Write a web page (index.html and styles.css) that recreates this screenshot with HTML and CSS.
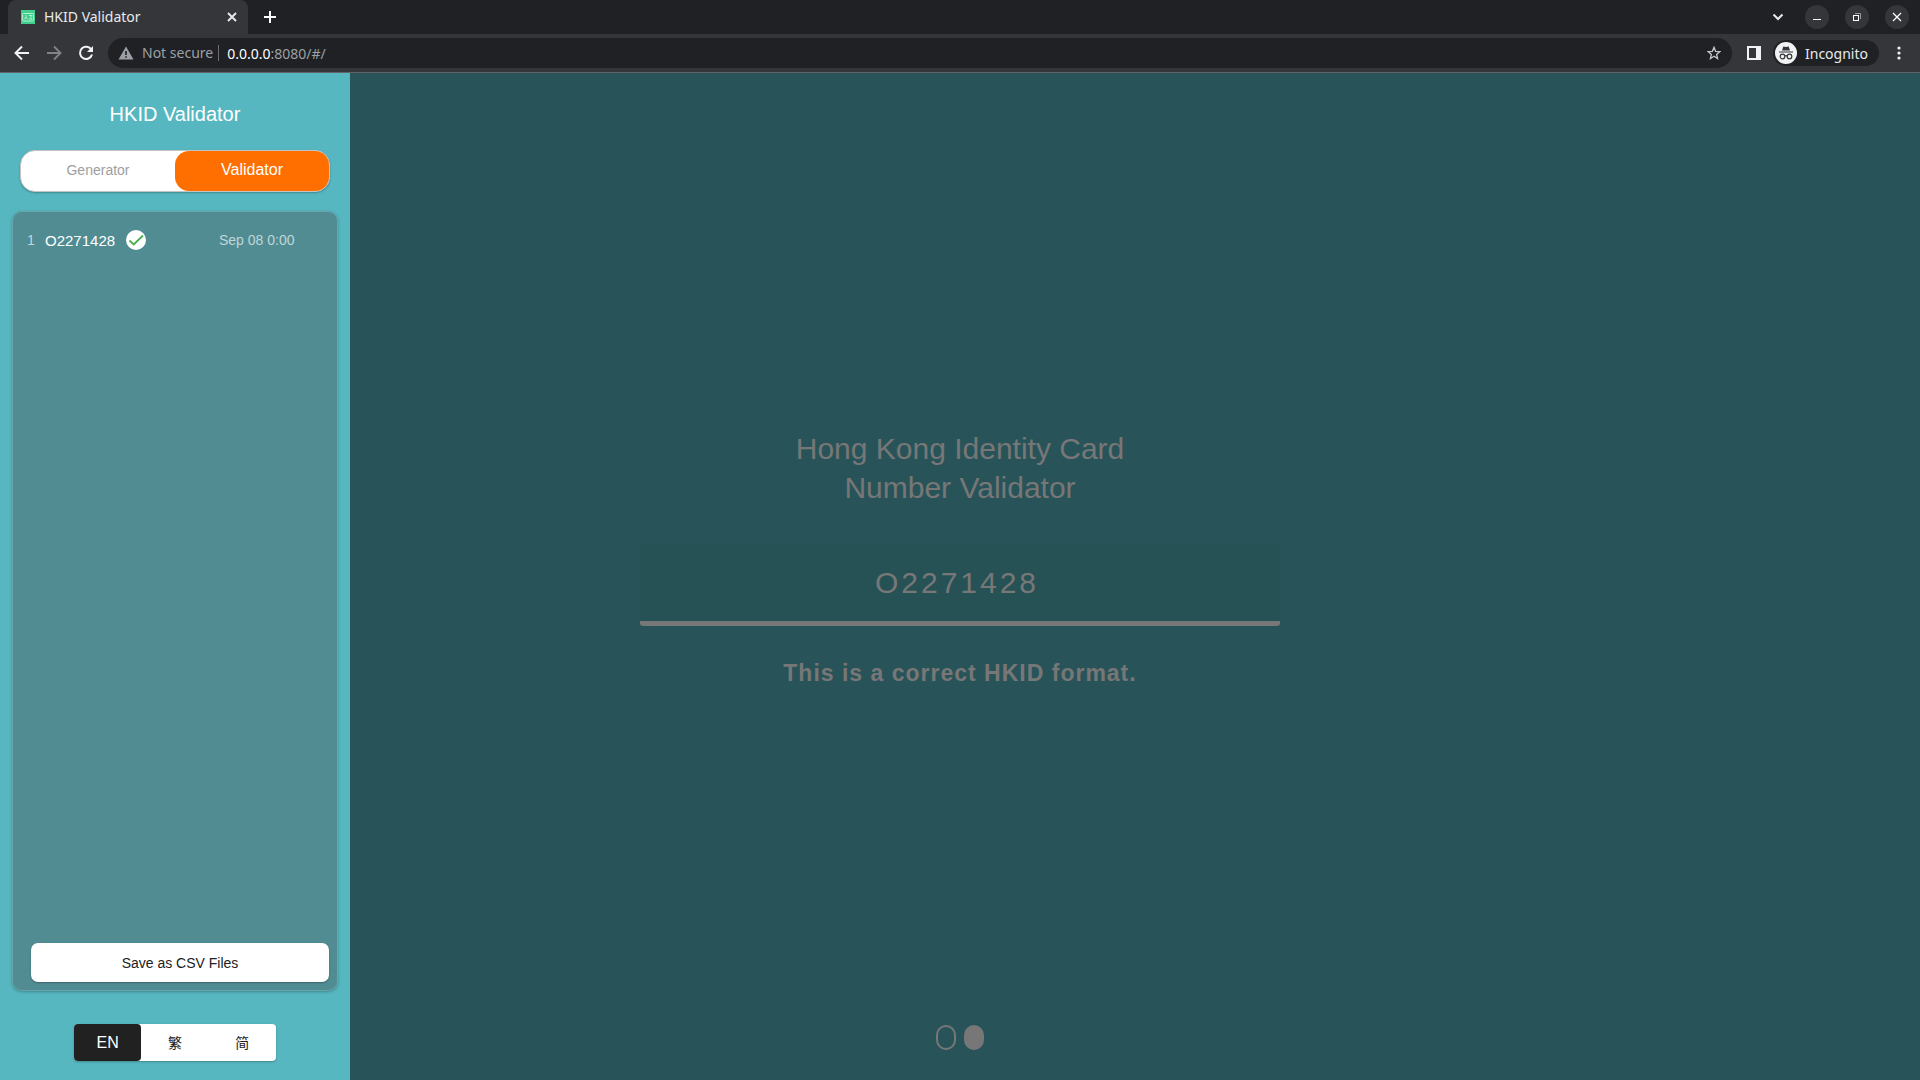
FILE: index.html
```
<!DOCTYPE html>
<html lang="en">
<head>
<meta charset="utf-8">
<title>HKID Validator</title>
<link rel="stylesheet" href="styles.css">
</head>
<body>
<div class="browser">
  <header class="chrome">
    <div class="tabstrip">
      <div class="tab">
        <svg class="favicon" width="14" height="14" viewBox="0 0 14 14" fill="none"><path fill="#41cf8e" d="M0 0h14v14H0z"/><rect x="1.5" y="3.5" width="11" height="7.5" rx=".8" stroke="#b5efd2"/><path d="M3.300 9.300l1.700-2.300 1.500 2.300M5 5v1.600M8 5.500h3L9.500 7.200 11 9H8" stroke="#b5efd2"/></svg>
        <span class="tab-title">HKID Validator</span>
        <button class="icon-btn tab-close" aria-label="Close tab"><svg width="10" height="10" viewBox="0 0 10 10" stroke="#e8eaed" stroke-width="1.900"><path d="M1 1l8 8M9 1L1 9"/></svg></button>
      </div>
      <button class="icon-btn new-tab" aria-label="New tab"><svg width="12" height="12" viewBox="0 0 12 12" stroke="#fff" stroke-width="2"><path d="M6 0v12M0 6h12"/></svg></button>
      <div class="window-controls">
        <button class="icon-btn" aria-label="Search tabs"><svg width="12" height="8" viewBox="0 0 12 8" fill="none" stroke="#e8eaed" stroke-width="2"><path d="M1.500 1.500L6 6l4.500-4.500"/></svg></button>
        <button class="icon-btn round" aria-label="Minimize"><svg width="10" height="10" viewBox="0 0 10 10" stroke="#fff"><path d="M1 7.500h8"/></svg></button>
        <button class="icon-btn round" aria-label="Restore"><svg width="10" height="10" viewBox="0 0 10 10" fill="none"><path d="M3 1.500h5.500V7" stroke="#999"/><rect x="1.500" y="3.500" width="5" height="5" stroke="#fff"/></svg></button>
        <button class="icon-btn round" aria-label="Close"><svg width="10" height="10" viewBox="0 0 10 10" stroke="#fff" stroke-width="1.300"><path d="M1 1l8 8M9 1L1 9"/></svg></button>
      </div>
    </div>
    <div class="toolbar">
      <div class="nav">
        <button class="icon-btn" aria-label="Back"><svg width="16" height="16" viewBox="0 0 16 16" fill="none" stroke="#f1f3f4" stroke-width="1.900"><path d="M15 8H2M8 1.500L1.500 8 8 14.500"/></svg></button>
        <button class="icon-btn" aria-label="Forward"><svg width="16" height="16" viewBox="0 0 16 16" fill="none" stroke="#808285" stroke-width="1.900"><path d="M1 8h13M8 1.500L14.500 8 8 14.500"/></svg></button>
        <button class="icon-btn" aria-label="Reload"><svg width="16" height="16" viewBox="0 0 16 16" fill="none" stroke="#f1f3f4" stroke-width="2"><path d="M13.400 4.800A6.100 6.100 0 1 0 14 9.400"/><path d="M15 1v6H9z" fill="#f1f3f4" stroke="none"/></svg></button>
      </div>
      <div class="omnibox">
        <svg width="16" height="14" viewBox="0 0 16 14"><path d="M8 .5L15.500 13.500H.5z" fill="#9aa0a6"/><path d="M7.200 5h1.600v4H7.200zM7.200 10.200h1.600v1.600H7.200z" fill="#202124"/></svg>
        <span class="security">Not secure</span>
        <div class="url" role="textbox" aria-label="Address"><span class="host">0.0.0.0</span>:8080/#/</div>
        <button class="icon-btn" aria-label="Bookmark"><svg width="14" height="14" viewBox="0 0 14 14" fill="none" stroke="#c4c7c5" stroke-width="1.300"><path d="M7 1.300l1.600 4 4.200.3-3.200 2.800 1 4.200L7 10.300l-3.600 2.300 1-4.200L1.200 5.600l4.200-.3z"/></svg></button>
      </div>
      <div class="tools">
        <button class="icon-btn" aria-label="Side panel"><svg width="14" height="14" viewBox="0 0 14 14"><path fill="#f1f3f4" fill-rule="evenodd" d="M0 0h14v14H0zM2 2v10h7V2z"/></svg></button>
        <button class="incognito"><svg width="22" height="22" viewBox="0 0 22 22" fill="none"><circle cx="11" cy="11" r="11" fill="#f1f3f4"/><path fill="#35363a" d="M7 8.500l1.300-4L11 5l2.700-.5 1.300 4zM4 9.500h14v1H4z"/><g stroke="#35363a" stroke-width="1.200"><circle cx="7.500" cy="14.500" r="2.300"/><circle cx="14.500" cy="14.500" r="2.300"/><path d="M9.800 14q1.200-.8 2.400 0"/></g></svg>Incognito</button>
        <button class="icon-btn" aria-label="Menu"><svg width="4" height="14" viewBox="0 0 4 14" fill="#f1f3f4"><circle cx="2" cy="2" r="1.600"/><circle cx="2" cy="7" r="1.600"/><circle cx="2" cy="12" r="1.600"/></svg></button>
      </div>
    </div>
  </header>

  <div class="page">
    <main class="stage">
      <form class="validator">
        <h1 class="heading"><label for="hkid">Hong Kong Identity Card<br>Number Validator</label></h1>
        <input class="hkid" id="hkid" type="text" value="O2271428">
        <p class="message">This is a correct HKID format.</p>
      </form>
      <nav class="dots">
        <button class="dot" aria-label="Generator"></button>
        <button class="dot active" aria-label="Validator"></button>
      </nav>
    </main>

    <aside class="drawer">
      <h2 class="drawer-title">HKID Validator</h2>
      <div class="switch">
        <button class="switch-item">Generator</button>
        <button class="switch-item active">Validator</button>
      </div>
      <section class="history">
        <ol class="records">
          <li class="record">
            <span class="index">1</span>
            <span class="number">O2271428</span>
            <svg width="20" height="20" viewBox="0 0 20 20" fill="none"><circle cx="10" cy="10" r="10" fill="#fff"/><path d="M3.500 10.500l4.200 4L17 5.500" stroke="#4caf50" stroke-width="1.800"/></svg>
            <time class="date">Sep 08 0:00</time>
          </li>
        </ol>
        <button class="save">Save as CSV Files</button>
      </section>
      <div class="languages">
        <button class="lang active">EN</button>
        <button class="lang" lang="zh-Hant">繁</button>
        <button class="lang" lang="zh-Hans">简</button>
      </div>
    </aside>
  </div>
</div>
</body>
</html>
```
FILE: styles.css
```
* { box-sizing: border-box; }

body {
  margin: 0;
  font-family: "Liberation Sans", "Noto Sans CJK SC", Arial, sans-serif;
}

button {
  margin: 0;
  padding: 0;
  border: 0;
  background: none;
  font: inherit;
  color: inherit;
}

h1, h2, p, ol { margin: 0; padding: 0; font-weight: 400; }

.browser {
  display: flex;
  flex-direction: column;
  min-height: 100vh;
}

/* Browser chrome */
.chrome {
  font-family: "Noto Sans", "Open Sans", sans-serif;
  font-size: 14px;
  color: #e8eaed;
  background: #35363a;
  border-bottom: 1px solid #626366;
}

.icon-btn {
  display: flex;
  align-items: center;
  justify-content: center;
}

.tabstrip {
  display: flex;
  align-items: center;
  height: 34px;
  padding: 0 11px 0 8px;
  background: #202124;
}

.tab {
  display: flex;
  align-items: center;
  width: 240px;
  height: 34px;
  padding: 0 11px 0 13px;
  gap: 9px;
  background: #35363a;
  border-radius: 8px 8px 0 0;
}

.tab-title {
  flex: 1;
  padding-bottom: 2px;
}

.new-tab { margin-left: 16px; }

.window-controls {
  display: flex;
  align-items: center;
  gap: 16px;
  margin-left: auto;
}

.window-controls .icon-btn:first-child { margin-right: 5px; }

.round {
  width: 24px;
  height: 24px;
  border-radius: 50%;
  background: #35363a;
}

.toolbar {
  display: flex;
  align-items: center;
  height: 38px;
  padding: 0 19px 0 14px;
}

.nav { display: flex; gap: 16px; }

.omnibox {
  display: flex;
  flex: 1;
  align-items: center;
  height: 30px;
  margin-left: 14px;
  padding: 0 11px 0 10px;
  gap: 8px;
  border-radius: 15px;
  background: #202124;
  color: #9aa0a6;
}

.security {
  padding-right: 5px;
  line-height: 16px;
  border-right: 1px solid #6b6e72;
}

.url { flex: 1; }
.host { color: #fff; }

.tools {
  display: flex;
  align-items: center;
  gap: 12px;
  margin-left: 15px;
}

.incognito {
  display: flex;
  align-items: center;
  height: 26px;
  padding: 0 11px 0 2px;
  gap: 8px;
  border-radius: 13px;
  background: #202124;
}

.tools .icon-btn:last-child { margin-left: 6px; }

/* Main page */
.page {
  position: relative;
  display: flex;
  flex: 1;
}

.stage {
  display: grid;
  flex: 1;
  grid-template-rows: 1fr auto 1fr;
  justify-items: center;
  background: #285459;
  color: #777;
}

.validator {
  display: flex;
  flex-direction: column;
  grid-row: 2;
  width: 33.3333%;
  padding-bottom: 38px;
  text-align: center;
}

.heading {
  font-size: 30px;
  line-height: 39px;
}

.hkid {
  width: 100%;
  height: 81px;
  margin: 38px 0 34px;
  padding: 0 6px 0 0;
  border: 0;
  border-bottom: 5px solid #777;
  border-radius: 3px;
  background: #265255;
  color: #777;
  font: 30px "Liberation Sans", Arial, sans-serif;
  letter-spacing: 3px;
  text-align: center;
}

.message {
  font-size: 23px;
  font-weight: 700;
  line-height: 26px;
  letter-spacing: 1px;
}

.dots {
  display: flex;
  align-items: flex-end;
  grid-row: 3;
  gap: 8px;
  padding-bottom: 30px;
}

.dot {
  width: 20px;
  height: 25px;
  border: 2px solid #777;
  border-radius: 10px;
}

.dot.active { background: #777; }

/* Drawer */
.drawer {
  position: absolute;
  inset: 0 auto 0 0;
  display: flex;
  flex-direction: column;
  width: 350px;
  padding: 29px 12px 19px;
  background: #56b7c1;
}

.drawer-title {
  font-size: 20px;
  line-height: 24px;
  color: #fff;
  text-align: center;
}

.switch {
  display: flex;
  height: 42px;
  margin: 24px 8px 19px;
  border: 1px solid #c4c4c4;
  border-radius: 15px;
  background: #fff;
  box-shadow: 0 1px 2px #0004;
}

.switch-item {
  flex: 1;
  padding-bottom: 2px;
  border-radius: 14px;
  font-size: 14px;
  color: #9e9e9e;
}

.switch-item.active {
  font-size: 16px;
  color: #fff;
  background: #ff6f00;
}

.history {
  display: flex;
  flex: 1;
  flex-direction: column;
  justify-content: space-between;
  padding: 15px 8px 8px 14px;
  border: 1px solid #68a5ab;
  border-radius: 10px;
  background: #508c92;
  box-shadow: 0 1px 3px #0004;
}

.records { list-style: none; }

.record {
  display: flex;
  align-items: center;
  height: 26px;
  font-size: 14px;
  color: #c0d6d8;
}

.index { width: 18px; }

.number {
  width: 81px;
  font-size: 15px;
  color: #fff;
}

.date { margin-left: 73px; }

.save {
  height: 39px;
  margin-left: 4px;
  border-radius: 7px;
  background: #fff;
  color: #212121;
  font-size: 14px;
  box-shadow: 0 1px 2px #0004;
}

.languages {
  display: flex;
  align-self: center;
  width: 202px;
  height: 37px;
  margin-top: 33px;
  border-radius: 4px;
  background: #fff;
  box-shadow: 0 1px 2px #0004;
}

.lang {
  flex: 1;
  padding-bottom: 2px;
  border-radius: 4px;
  font-size: 14px;
  color: #212121;
}

.lang.active {
  padding: 0;
  font-size: 16px;
  color: #fff;
  background: #212121;
}
```
